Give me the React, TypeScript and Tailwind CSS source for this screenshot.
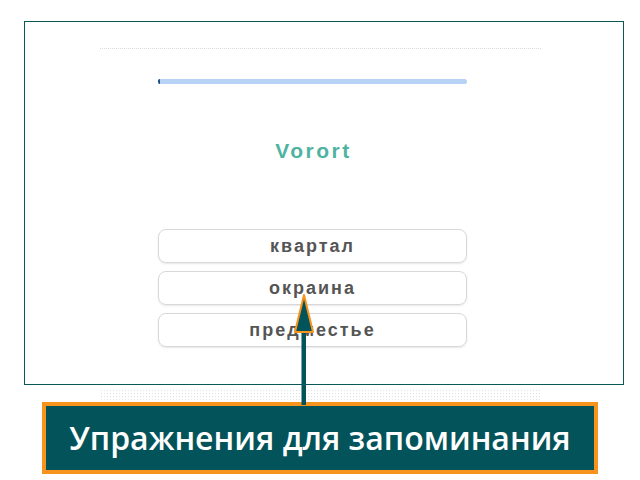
import React from "react";

const options = ["квартал", "окраина", "предместье"];

// Pointer from the caption up to the middle answer
function Pointer() {
  return (
    <svg
      className="absolute left-[290px] top-[290px]"
      width="30"
      height="120"
      viewBox="0 0 30 120"
    >
      <rect x="11.5" y="38" width="4.5" height="77" fill="#03535a" />
      <polygon
        points="14,5 5,42 23,42"
        fill="#03535a"
        stroke="#f7941d"
        strokeWidth="2"
        strokeLinejoin="round"
      />
    </svg>
  );
}

export default function App() {
  return (
    <div className="relative w-[640px] h-[480px] bg-white overflow-hidden">
      <div className="ml-[24px] mt-[21px] w-[600px] h-[364px] border-[1.5px] border-[#0b5858] flex flex-col">
        <div className="ml-[75px] mt-[26px] w-[441px] border-t border-dotted border-[#dcdcdc]" />

        <div className="ml-[133px] mt-[30px] w-[309px] h-[5px] rounded-full bg-[#b6d2f4] flex">
          <div className="w-[2px] h-full rounded-l-full bg-[#1f4f86]" />
        </div>

        <div className="mt-[55px] ml-[134px] w-[309px] text-center text-[21px] leading-[24px] font-bold tracking-[2.5px] text-[#4fb3a1] font-['Liberation_Sans',sans-serif]">
          Vorort
        </div>

        <div className="ml-[133px] mt-[66px] w-[309px] flex flex-col gap-[8px]">
          {options.map((o) => (
            <div
              key={o}
              className="h-[34px] rounded-lg border-[1.5px] border-[#d8d8d8] shadow-[0_1px_2px_rgba(0,0,0,0.1)] flex items-center justify-center text-[18px] font-bold tracking-[2px] text-[#555] font-['Liberation_Sans',sans-serif]"
            >
              {o}
            </div>
          ))}
        </div>
      </div>

      <div className="ml-[100px] mt-[4px] w-[441px] h-[11px] bg-[radial-gradient(#e2e2e2_0.7px,transparent_0.9px)] bg-[length:3px_3px]" />

      <div className="ml-[42px] mt-[2px] w-[556px] h-[72px] border-4 border-[#f7941d] bg-[#03535a] flex items-center justify-center">
        <span className="text-white text-[32px] font-semibold font-['Open_Sans',sans-serif]">
          Упражнения для запоминания
        </span>
      </div>

      <Pointer />
    </div>
  );
}
